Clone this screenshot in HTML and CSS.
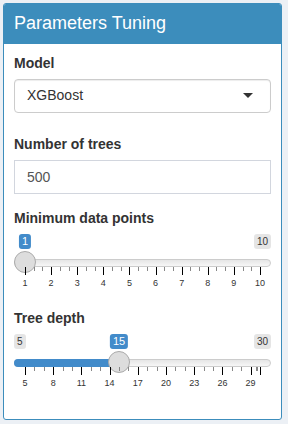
FILE: index.html
```
<!DOCTYPE html>
<html lang="en">
<head>
  <meta charset="UTF-8" />
  <title>Parameters Tuning</title>
  <link rel="stylesheet" href="styles.css">
</head>
<body>
  <div class="box">
    <div class="box-header">
      <h3>Parameters Tuning</h3>
    </div>

    <div class="box-body">
      <div class="form-group select-group">
        <label>Model</label>
        <div class="select-input">
          <span>XGBoost</span>
          <span class="caret"></span>
        </div>
      </div>

      <div class="form-group">
        <label for="trees">Number of trees</label>
        <input id="trees" class="form-control" type="number" value="500">
      </div>

      <div class="form-group">
        <label>Minimum data points</label>
        <div class="irs" id="minPoints"></div>
      </div>

      <div class="form-group">
        <label>Tree depth</label>
        <div class="irs" id="treeDepth"></div>
      </div>
    </div>
  </div>

<script>
const sliders = [
  { id: "minPoints", min: 1, max: 10, from: 1, bar: false, showMin: false,
    labels: [1, 2, 3, 4, 5, 6, 7, 8, 9, 10] },
  { id: "treeDepth", min: 5, max: 30, from: 15, bar: true, showMin: true,
    labels: [5, 8, 11, 14, 17, 20, 23, 26, 29] }
];

function tick(pct, small) {
  return `<span class="grid-pol${small ? " small" : ""}" style="left: ${pct}%"></span>`;
}

function buildSlider(s) {
  const el = document.getElementById(s.id);
  const range = s.max - s.min;
  const p = (s.from - s.min) / range;
  let grid = "";
  let prev = null;

  s.labels.forEach(v => {
    const pct = (v - s.min) / range * 100;
    if (prev !== null) {
      grid += tick(prev + (pct - prev) / 3, true) + tick(prev + (pct - prev) * 2 / 3, true);
    }
    grid += tick(pct) + `<span class="grid-text" style="left: ${pct}%">${v}</span>`;
    prev = pct;
  });

  // last grid step is shorter than the others, ticks bunch up near the end
  if (prev < 100) {
    grid += tick(prev + (100 - prev) * 0.55, true) + tick(prev + (100 - prev) * 0.72, true) + tick(100);
  }

  el.innerHTML = `
    <span class="irs-line"></span>
    ${s.bar ? `<span class="irs-bar" style="width: calc(11px + (100% - 22px) * ${p})"></span>` : ""}
    ${s.showMin ? `<span class="irs-min">${s.min}</span>` : ""}
    <span class="irs-max">${s.max}</span>
    <span class="irs-single" style="left: calc(11px + (100% - 22px) * ${p})">${s.from}</span>
    <span class="irs-handle" style="left: calc((100% - 22px) * ${p})"></span>
    <div class="irs-grid">${grid}</div>`;
}

sliders.forEach(buildSlider);
</script>
</body>
</html>
```

FILE: styles.css
```
body {
  margin: 0;
  padding: 3px;
  background: #ecf0f5;
  font-family: "Liberation Sans", Arial, sans-serif;
  font-size: 14px;
  line-height: 1.42857;
  color: #333;
}

.box {
  width: 279px;
  box-sizing: border-box;
  background: #fff;
  border: 1px solid #3c8dbc;
  border-radius: 3px;
  overflow: hidden;
}

.box-header {
  background: #3c8dbc;
  color: #fff;
  padding: 10px;
}

.box-header h3 {
  margin: 0;
  font-size: 18px;
  font-weight: normal;
  line-height: 1.1;
}

.box-body {
  padding: 10px;
}

.form-group {
  margin-bottom: 15px;
}

.select-group {
  margin-bottom: 22px;
}

label {
  display: block;
  font-weight: bold;
  margin-bottom: 5px;
}

.select-input {
  display: flex;
  align-items: center;
  justify-content: space-between;
  height: 34px;
  box-sizing: border-box;
  padding: 6px 17px 6px 12px;
  margin-top: 1px;
  border: 1px solid #ccc;
  border-radius: 4px;
  box-shadow: inset 0 1px 1px rgba(0, 0, 0, 0.075);
  color: #333;
}

.caret {
  width: 0;
  height: 0;
  border-style: solid;
  border-width: 5px 5px 0 5px;
  border-color: #333 transparent transparent transparent;
}

.form-control {
  display: block;
  width: 100%;
  height: 34px;
  box-sizing: border-box;
  margin: 0;
  padding: 6px 12px;
  border: 1px solid #d2d6de;
  border-radius: 0;
  font-family: inherit;
  font-size: 14px;
  color: #555;
  -moz-appearance: textfield;
}

.form-control::-webkit-inner-spin-button,
.form-control::-webkit-outer-spin-button {
  -webkit-appearance: none;
  margin: 0;
}

/* range slider, shiny skin */
.irs {
  position: relative;
  height: 60px;
}

.irs-line {
  position: absolute;
  left: 0;
  right: 0;
  top: 25px;
  height: 8px;
  box-sizing: border-box;
  border: 1px solid #ccc;
  border-radius: 16px;
  background: linear-gradient(to bottom, #ddd -50%, #fff 150%);
}

.irs-bar {
  position: absolute;
  left: 0;
  top: 25px;
  height: 8px;
  background: #428bca;
  border-radius: 16px 0 0 16px;
}

.irs-min,
.irs-max,
.irs-single {
  position: absolute;
  top: 0;
  padding: 1px 3px;
  border-radius: 3px;
  font-size: 10px;
  line-height: 1.333;
}

.irs-min,
.irs-max {
  background: rgba(0, 0, 0, 0.1);
  color: #333;
}

.irs-min { left: 0; }
.irs-max { right: 0; }

.irs-single {
  font-size: 11px;
  line-height: 13px;
  background: #428bca;
  color: #fff;
  transform: translateX(-50%);
}

.irs-handle {
  position: absolute;
  top: 17px;
  width: 22px;
  height: 22px;
  box-sizing: border-box;
  border: 1px solid #aaa;
  border-radius: 50%;
  background: #ddd;
}

.irs-grid {
  position: absolute;
  left: 11px;
  right: 11px;
  top: 33px;
  height: 27px;
}

.grid-pol {
  position: absolute;
  top: 0;
  width: 1px;
  height: 8px;
  background: #000;
}

.grid-pol.small {
  height: 4px;
  background: #888;
}

.grid-text {
  position: absolute;
  top: 12px;
  font-size: 9px;
  line-height: 1;
  color: #333;
  transform: translateX(-50%);
}
```
